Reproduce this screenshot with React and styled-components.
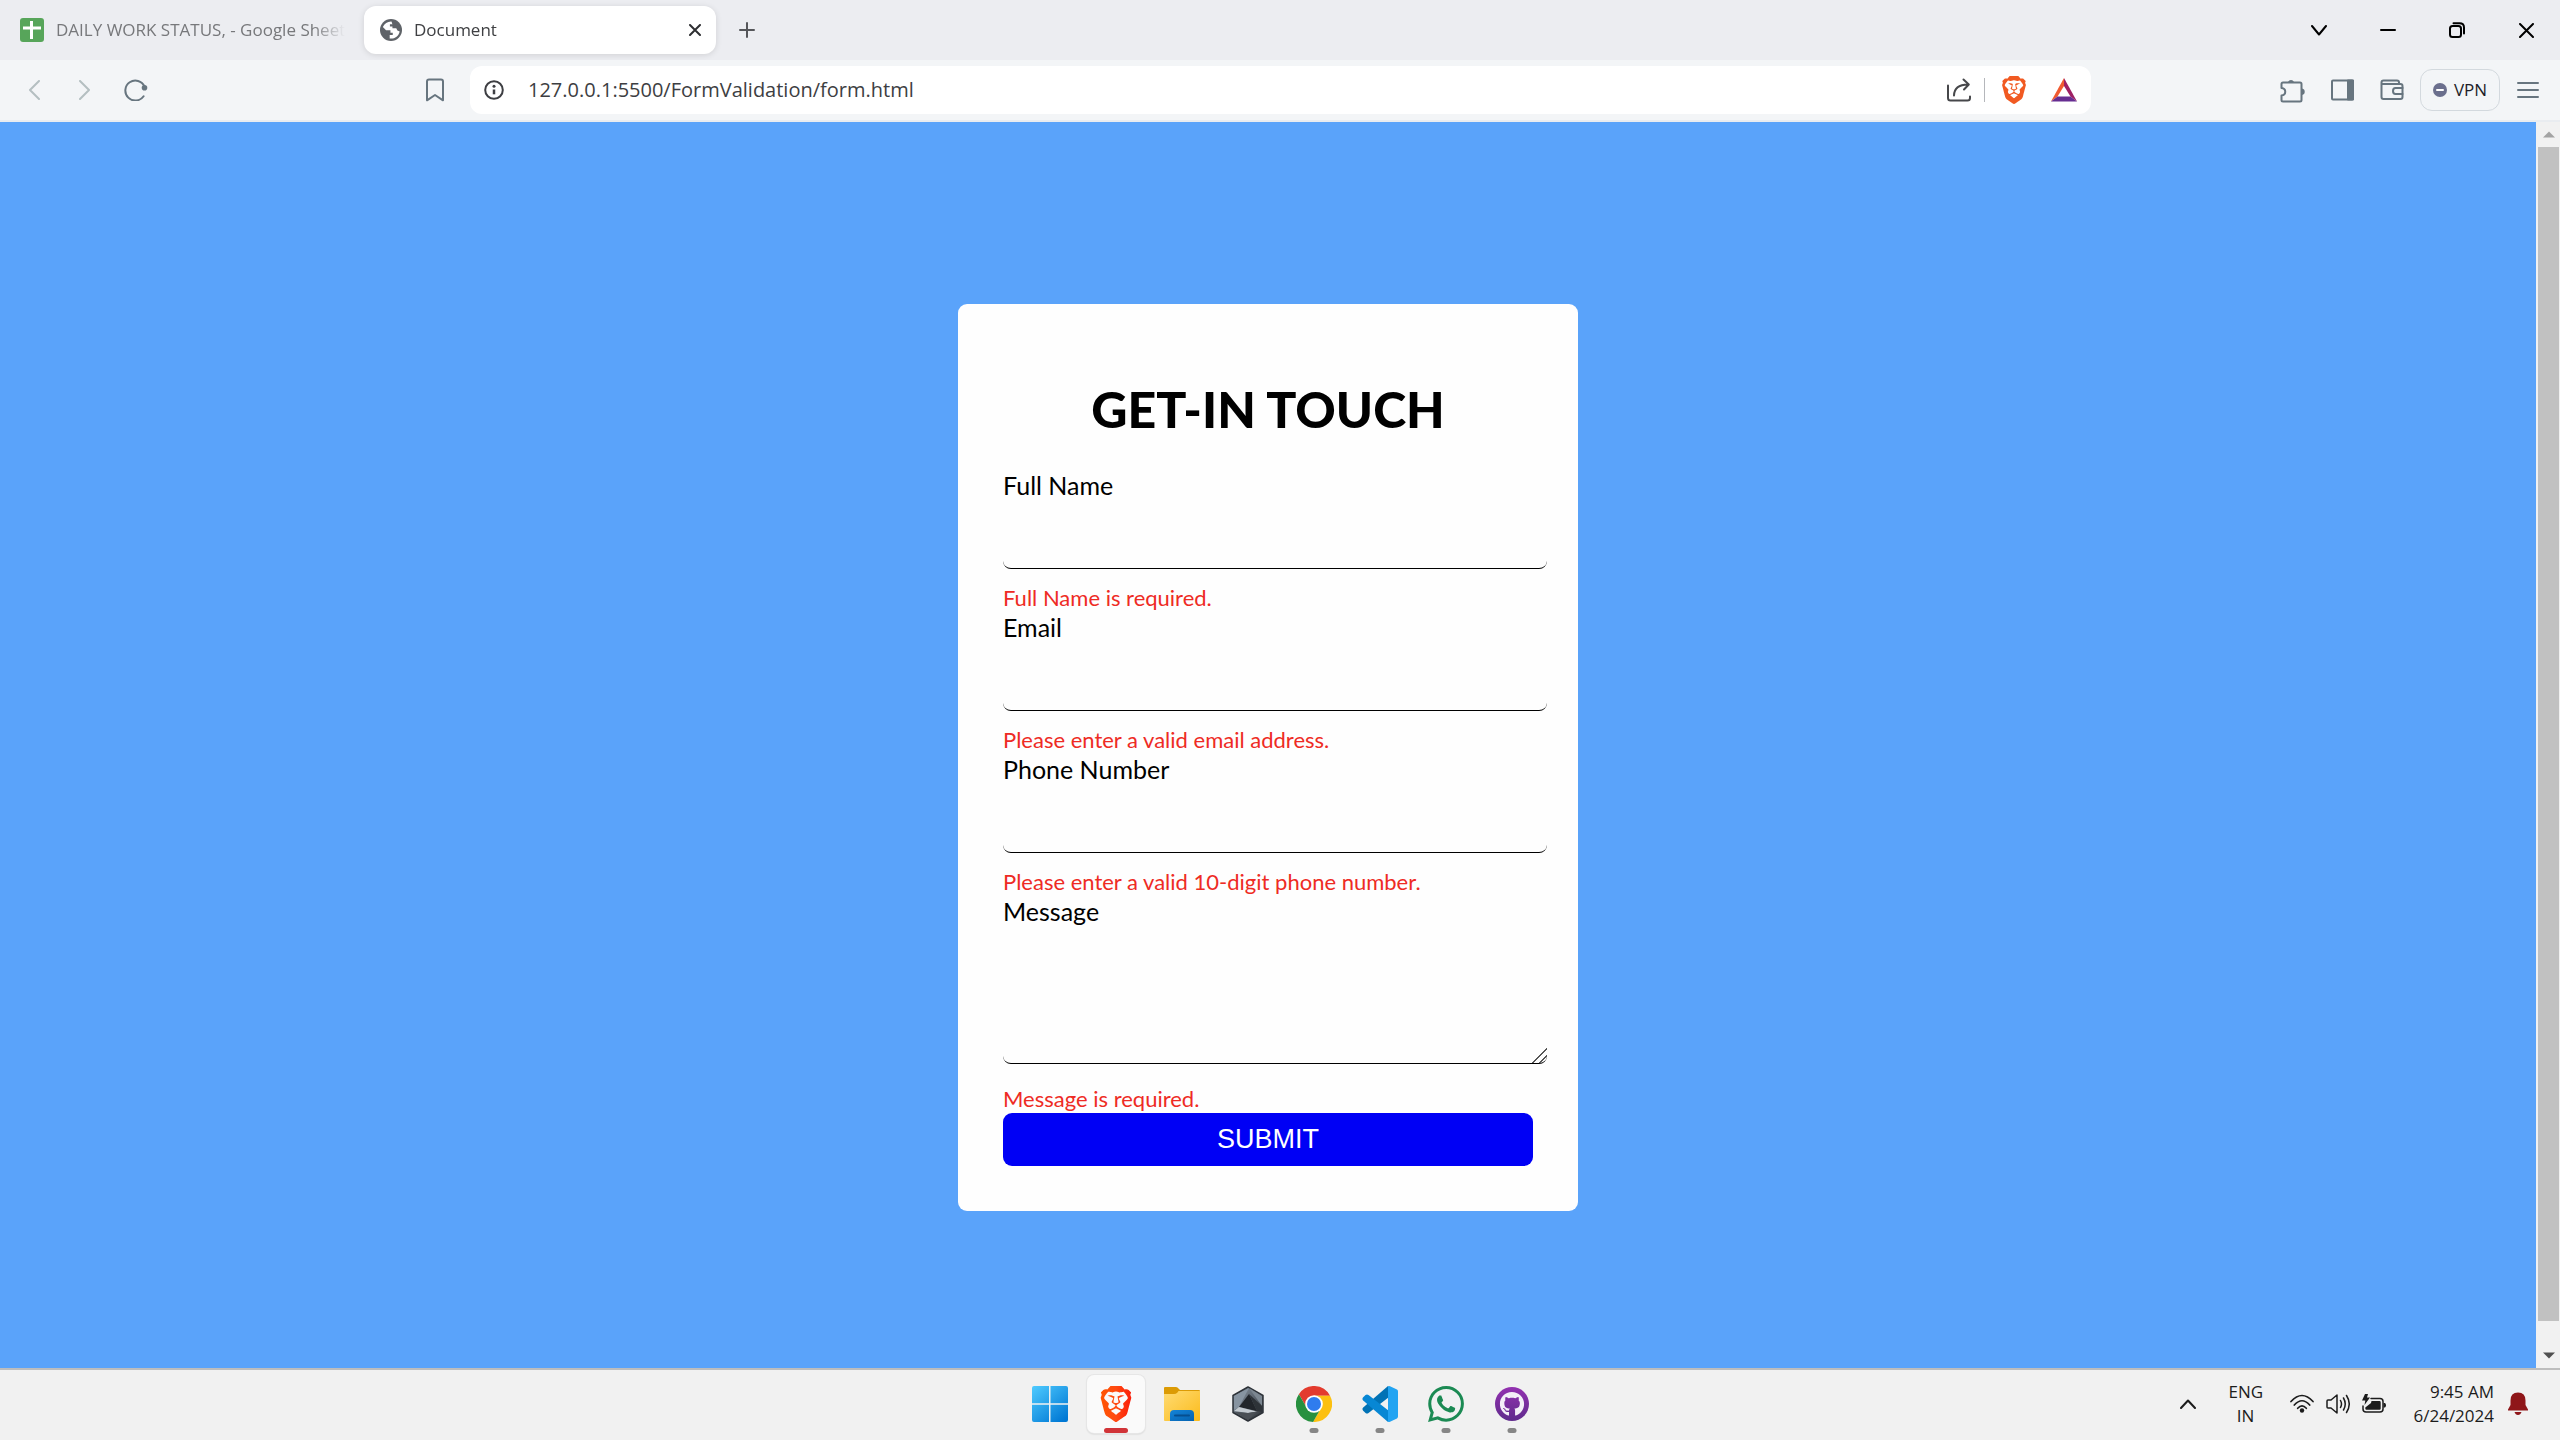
import React from 'react';
import styled, { createGlobalStyle, css } from 'styled-components';
import { SiBrave, SiWhatsapp } from 'react-icons/si';
import { FaGithub } from 'react-icons/fa';

const uiFont = '"Segoe UI", "Open Sans", "Noto Sans", sans-serif';
const formFont = '"Gill Sans", "Gill Sans MT", Lato, sans-serif';

const GlobalStyle = createGlobalStyle`
  *, *::before, *::after { box-sizing: border-box; }
  body { margin: 0; overflow: hidden; }
  button { border: 0; padding: 0; background: none; font: inherit; color: inherit; cursor: pointer; }
  svg { display: block; flex: none; }
`;

const Screen = styled.div`
  display: flex;
  flex-direction: column;
  height: 100vh;
  font-family: ${uiFont};
  font-size: 17px;
  line-height: 24px;
  color: #1c1c1c;
`;

/* ---------- Tab strip ---------- */

const TabStrip = styled.header`
  display: flex;
  align-items: flex-start;
  height: 60px;
  padding-top: 6px;
  background: #ecedf1;
`;

const Tabs = styled.div`
  display: flex;
  gap: 12px;
`;

const Tab = styled.div`
  display: flex;
  align-items: center;
  gap: 12px;
  width: 352px;
  height: 48px;
  padding: 0 4px 0 20px;
  border-radius: 12px;
  color: #77787b;
  ${({ $active }) =>
    $active &&
    css`
      padding: 0 8px 0 16px;
      background: #fff;
      color: #3f4043;
      box-shadow: 0 1px 6px rgba(0, 0, 0, 0.12);
    `}
`;

const TabTitle = styled.span`
  flex: 1;
  min-width: 0;
  overflow: hidden;
  white-space: nowrap;
  mask-image: linear-gradient(to right, #000 88%, transparent 99%);
`;

const IconButton = styled.button`
  display: flex;
  align-items: center;
  justify-content: center;
  width: ${({ $width }) => $width || 50}px;
  height: 48px;
  color: ${({ $color }) => $color || '#67757f'};
`;

const WindowControls = styled.div`
  display: flex;
  gap: 1px;
  margin-left: auto;
`;

/* ---------- Toolbar ---------- */

const Toolbar = styled.nav`
  display: flex;
  align-items: center;
  height: 62px;
  background: #f3f5f7;
  border-bottom: 2px solid #e9ecf0;
`;

const NavGroup = styled.div`
  display: flex;
  width: 470px;
  padding: 0 10px 0 8px;
`;

const BookmarkSlot = styled.div`
  margin-left: auto;
`;

const AddressBar = styled.form`
  display: flex;
  flex: 1;
  align-items: center;
  height: 48px;
  padding: 0 2px 0 14px;
  background: #fff;
  border-radius: 12px;
`;

const AddressInput = styled.input`
  flex: 1;
  min-width: 0;
  margin-left: 24px;
  padding: 0;
  border: 0;
  outline: 0;
  background: none;
  font-family: ${uiFont};
  font-size: 20px;
  line-height: 28px;
  color: #3d3e42;
`;

const Divider = styled.span`
  width: 1px;
  height: 24px;
  margin-right: 4px;
  background: #b5b7bb;
`;

const ToolGroup = styled.div`
  display: flex;
  align-items: center;
  justify-content: flex-end;
  width: 469px;
  padding-right: 7px;
`;

const VpnButton = styled.button`
  display: flex;
  align-items: center;
  justify-content: center;
  gap: 7px;
  width: 80px;
  height: 42px;
  margin: 0 3px;
  border: 1px solid #d3d9de;
  border-radius: 12px;
  color: #1d1d28;
`;

/* ---------- Page ---------- */

const Viewport = styled.div`
  display: flex;
  flex: 1;
  min-height: 0;
`;

const Page = styled.main`
  display: flex;
  flex: 1;
  align-items: flex-start;
  justify-content: center;
  padding-top: 182px;
  background: #5aa3fa;
`;

const Card = styled.form`
  width: 620px;
  padding: 75px 45px 45px;
  background: #fefefe;
  border-radius: 9px;
  font-family: ${formFont};
`;

const Title = styled.h1`
  margin: 0 0 31px;
  font-size: 50px;
  font-weight: 900;
  line-height: 60px;
  text-align: center;
  color: #000;
`;

const Field = styled.div`
  display: flex;
  flex-direction: column;
`;

const Label = styled.label`
  font-size: 25px;
  line-height: 30px;
  color: #000;
`;

const control = css`
  box-sizing: content-box;
  width: 100%;
  border: 0;
  border-bottom: 1px solid #000;
  border-radius: 8px;
  outline: 0;
  background: none;
  font-family: ${formFont};
  font-size: 25px;
`;

const TextInput = styled.input`
  ${control}
  height: 54px;
  margin-bottom: 15px;
  padding: 7px;
`;

const TextArea = styled.textarea`
  ${control}
  height: 123px;
  margin-bottom: 21px;
  padding: 7px;

  &::-webkit-resizer {
    background: linear-gradient(
      135deg,
      transparent 49%,
      #555 50% 55%,
      transparent 56% 71%,
      #555 72% 77%,
      transparent 78%
    );
  }
`;

const ErrorText = styled.p`
  margin: 0;
  font-size: 22px;
  line-height: 28px;
  color: #ee2b24;
`;

const SubmitButton = styled.button`
  display: block;
  width: 100%;
  height: 53px;
  background: #0000f5;
  border-radius: 9px;
  font-family: Arial, "Liberation Sans", sans-serif;
  font-size: 27px;
  line-height: 53px;
  color: #fff;
`;

const ScrollBar = styled.div`
  display: flex;
  flex-direction: column;
  width: 24px;
  padding: 0 1px 0 2px;
  background: #f1f1f1;
`;

const ScrollArrow = styled.button`
  display: flex;
  align-items: center;
  justify-content: center;
  height: 25px;
  color: ${({ $color }) => $color};
`;

const ScrollThumb = styled.div`
  flex: 1;
  margin-bottom: 22px;
  background: #c1c1c1;
`;

/* ---------- Taskbar ---------- */

const Taskbar = styled.footer`
  display: grid;
  grid-template-columns: 1fr auto 1fr;
  align-items: center;
  height: 72px;
  padding-bottom: 2px;
  background: #f1f1f1;
  border-top: 2px solid #bdbdbd;
`;

const Apps = styled.div`
  display: flex;
  grid-column: 2;
  gap: 8px;
  padding-left: 2px;
`;

const AppButton = styled.button`
  position: relative;
  display: flex;
  align-items: center;
  justify-content: center;
  width: 58px;
  height: 58px;
  border-radius: 7px;
  ${({ $active }) =>
    $active &&
    css`
      background: #fafafa;
      box-shadow: 0 0 0 1px #e6e6e6, 0 1px 2px rgba(0, 0, 0, 0.2);
    `}
`;

const Indicator = styled.span`
  position: absolute;
  bottom: 0;
  left: 50%;
  width: ${({ $active }) => ($active ? 24 : 9)}px;
  height: 5px;
  border-radius: 3px;
  background: ${({ $active }) => ($active ? '#d13438' : '#868686')};
  transform: translateX(-50%);
`;

const Tray = styled.div`
  display: flex;
  align-items: center;
  justify-content: flex-end;
  padding-right: 32px;
`;

const Language = styled.div`
  width: 34px;
  margin: 0 28px 0 32px;
  text-align: center;
`;

const StatusIcons = styled.div`
  display: flex;
  gap: 12px;
`;

const Clock = styled.div`
  margin: 0 14px 0 27px;
  text-align: right;
`;

/* ---------- Icons ---------- */

const Glyph = ({ w = 24, h = w, sw = 2, box, children, ...rest }) => (
  <svg
    width={w}
    height={h}
    viewBox={box || `0 0 ${w} ${h}`}
    fill="none"
    stroke="currentColor"
    strokeWidth={sw}
    strokeLinecap="round"
    strokeLinejoin="round"
    aria-hidden="true"
    {...rest}
  >
    {children}
  </svg>
);

const SheetsIcon = () => (
  <Glyph stroke="none">
    <rect width="24" height="24" rx="3" fill="#57a55a" />
    <path d="M3 8.500H10V3H13V8.500H21V11.500H13V21H10V11.500H3Z" fill="#fff" />
  </Glyph>
);

const GlobeIcon = () => (
  <Glyph w={22} box="2 2 20 20" stroke="none">
    <circle cx="12" cy="12" r="10" fill="#5f6368" />
    <path
      d="M12.500 4.200C9 4 6 6 4.600 9.200L7.500 12.200H11.500V14.400H13.600V16.500H10.800V19.700C15 20.300 19 17.700 19.900 13.300L17.800 12.500L16.800 10.500H13.300V8.800H11V6.700H13.500Z"
      fill="#fff"
    />
    <path d="M12.500 4.200L13.500 6.700H15.500L17 5.300Z" fill="#5f6368" />
  </Glyph>
);

const CloseIcon = ({ size = 15, sw = 2 }) => (
  <Glyph w={size} sw={sw}>
    <path d={`M1 1L${size - 1} ${size - 1}M${size - 1} 1L1 ${size - 1}`} />
  </Glyph>
);

const PlusIcon = () => (
  <Glyph w={16}>
    <path d="M8 1V15M1 8H15" />
  </Glyph>
);

const ChevronIcon = ({ d, w, h, sw }) => (
  <Glyph w={w} h={h} sw={sw}>
    <path d={d} />
  </Glyph>
);

const RestoreIcon = () => (
  <Glyph w={16}>
    <rect x="1" y="4" width="11" height="11" rx="2.500" />
    <path d="M4.500 1.200H10.500Q15 1.200 15 5.500V11.500" />
  </Glyph>
);

const ReloadIcon = () => (
  <Glyph w={24} h={22}>
    <path d="M19.600 17.200A10 10 0 1 1 20.500 7.500" />
    <circle cx="20.500" cy="8.700" r="2.800" fill="currentColor" stroke="none" />
  </Glyph>
);

const BookmarkIcon = () => (
  <Glyph w={18} h={24}>
    <path d="M3 1.500H15Q17 1.500 17 3.500V22.300L9 17L1 22.300V3.500Q1 1.500 3 1.500Z" />
  </Glyph>
);

const InfoIcon = () => (
  <Glyph w={20} color="#3d3e42">
    <circle cx="10" cy="10" r="8.800" />
    <path d="M10 9.500V14.300" strokeLinecap="butt" strokeWidth="2.500" />
    <circle cx="10" cy="6.300" r="1.500" fill="currentColor" stroke="none" />
  </Glyph>
);

const ShareIcon = () => (
  <Glyph w={24}>
    <path d="M1 7.500V20Q1 22.500 3.500 22.500H20.500Q23 22.500 23 20V18.500" />
    <path d="M7 17.500C7.200 10.500 11 6.500 21 6.500M16.500 1.500L21.800 6.500L17 11.500" />
  </Glyph>
);

const BatIcon = () => (
  <Glyph w={26} h={24} stroke="none">
    <path d="M13 0L13 8L6.500 18.500L0 23.500Z" fill="#f15a30" />
    <path d="M13 0L26 23.500L19.500 18.500L13 8Z" fill="#9e1f63" />
    <path d="M0 23.500L6.500 18.500H19.500L26 23.500Z" fill="#662d91" />
  </Glyph>
);

const ExtensionIcon = () => (
  <Glyph w={25}>
    <path d="M3 4.500H20Q21.500 4.500 21.500 6V22Q21.500 23.500 20 23.500H3Q1.500 23.500 1.500 22V17.500C6.500 17 6.500 10.500 1.500 10V6Q1.500 4.500 3 4.500Z" />
    <path d="M8 4A3.300 3.300 0 0 1 14 4ZM22 10.500A3.300 3.300 0 0 1 22 17Z" fill="currentColor" stroke="none" />
  </Glyph>
);

const SidebarIcon = () => (
  <Glyph w={23} h={22}>
    <rect x="1" y="1.500" width="21" height="19" rx="1" />
    <path d="M17 1.500H22V20.500H17Z" fill="currentColor" />
  </Glyph>
);

const WalletIcon = () => (
  <Glyph w={24} h={22}>
    <path d="M19 5V3.500Q19 1.500 17 1.500H3.500Q1.500 1.500 1.500 3.500V18Q1.500 20 3.500 20H20.500Q22.500 20 22.500 18V7Q22.500 5 20.500 5H2" />
    <path d="M22.500 9H15.500Q13 9 13 12T15.500 15H22.500" />
  </Glyph>
);

const VpnDot = () => (
  <Glyph w={14} stroke="none">
    <circle cx="7" cy="7" r="7" fill="#6b6f8d" />
    <rect x="3" y="6" width="8" height="2" rx="1" fill="#fff" />
  </Glyph>
);

const MenuIcon = () => (
  <Glyph w={22} h={16}>
    <path d="M1 1H21M1 8H21M1 15H21" />
  </Glyph>
);

const WindowsIcon = () => (
  <Glyph w={36} stroke="none">
    <defs>
      <linearGradient id="win" gradientUnits="userSpaceOnUse" x1="0" y1="0" x2="30" y2="36">
        <stop offset="0" stopColor="#4fcbff" />
        <stop offset="1" stopColor="#0078d4" />
      </linearGradient>
    </defs>
    <path
      d="M2 0H17V17.300H0V2Q0 0 2 0ZM18.500 0H34Q36 0 36 2V17.300H18.500ZM0 18.700H17V36H2Q0 36 0 34ZM18.500 18.700H36V34Q36 36 34 36H18.500Z"
      fill="url(#win)"
    />
  </Glyph>
);

const BraveAppIcon = () => (
  <>
    <svg width="0" height="0" aria-hidden="true">
      <defs>
        <linearGradient id="brave" x1="0" x2="1">
          <stop offset="0" stopColor="#ff5500" />
          <stop offset="0.500" stopColor="#ff4a12" />
          <stop offset="1" stopColor="#fb1c08" />
        </linearGradient>
      </defs>
    </svg>
    <SiBrave size={36} fill="url(#brave)" />
  </>
);

const FolderIcon = () => (
  <Glyph w={36} h={34} stroke="none">
    <defs>
      <linearGradient id="folder" x1="0" y1="0" x2="1" y2="1">
        <stop offset="0" stopColor="#ffdb73" />
        <stop offset="1" stopColor="#fbbb1b" />
      </linearGradient>
      <linearGradient id="drawer" x1="0" y1="0" x2="1" y2="1">
        <stop offset="0" stopColor="#1484d8" />
        <stop offset="1" stopColor="#0562b0" />
      </linearGradient>
    </defs>
    <path d="M1 0H12Q13.500 0 15 2L16 3H35Q36 3 36 4V10H0V1Q0 0 1 0Z" fill="#dc9b05" />
    <path d="M0 7H10Q12 7 13.500 5.500L14.500 4H36V33Q36 34 35 34H1Q0 34 0 33Z" fill="url(#folder)" />
    <path d="M6 34V27Q6 23 10 23H26Q30 23 30 27V34Z" fill="url(#drawer)" />
    <path d="M11 28.500H25" stroke="#064f8f" strokeWidth="2" />
  </Glyph>
);

const HexIcon = () => (
  <Glyph w={32} h={36} stroke="none">
    <defs>
      <linearGradient id="hex" x1="0" y1="0" x2="1" y2="1">
        <stop offset="0" stopColor="#8f9ba8" />
        <stop offset="0.500" stopColor="#5d6670" />
        <stop offset="1" stopColor="#2a2d31" />
      </linearGradient>
    </defs>
    <path d="M16 1L31 9.500V26.500L16 35L1 26.500V9.500Z" fill="url(#hex)" stroke="#2d3238" strokeWidth="1.500" />
    <path d="M17 2L30 10V20Z" fill="#7c8791" />
    <path d="M17 2L2 10V24L7 21Z" fill="#8794a1" />
    <path d="M17 8L25 25L7 21Z" fill="#22262b" />
    <path d="M2 25L7 21L25 25.500L16 27Z" fill="#c3cad0" />
    <path d="M2.500 26L16 27L25 25.500L16 34Z" fill="#4a4f55" />
    <path d="M17 8L30 20V26L25 25Z" fill="#2e3338" />
  </Glyph>
);

const ChromeIcon = () => (
  <Glyph w={36} stroke="none">
    <path d="M2.880 8.220A18 18 0 0 1 34.030 9.800H18L10.900 22.100Z" fill="#e33b2e" />
    <path d="M34.030 9.800A18 18 0 0 1 17.090 35.980L25.100 22.100L18 9.800Z" fill="#fcc010" />
    <path d="M17.090 35.980A18 18 0 0 1 2.880 8.220L10.900 22.100H25.100Z" fill="#27903f" />
    <circle cx="18" cy="18" r="8.800" fill="#fff" />
    <circle cx="18" cy="18" r="7" fill="#2f7cee" />
  </Glyph>
);

const CodeIcon = () => (
  <Glyph w={36} stroke="none">
    <path d="M26 0L1.200 21.500Q-0.300 23 1.200 24.700L3.500 27Q5 28 6.500 27L27 11Z" fill="#0172b5" />
    <path d="M26 36L1.200 14.500Q-0.300 13 1.200 11.300L3.500 9Q5 8 6.500 9L27 25Z" fill="#0787d4" />
    <path d="M26 0.300Q27 -0.200 28 0.300L35 3.600Q36 4.200 36 5.500V30.500Q36 31.800 35 32.400L28 35.700Q27 36.200 26 35.700Z" fill="#22a4f2" />
  </Glyph>
);

const GithubIcon = () => (
  <Glyph w={36} stroke="none">
    <defs>
      <linearGradient id="hub" x1="0" y1="0" x2="0" y2="1">
        <stop offset="0" stopColor="#9331b0" />
        <stop offset="1" stopColor="#5f2a8c" />
      </linearGradient>
    </defs>
    <circle cx="18" cy="18" r="17" fill="url(#hub)" />
    <FaGithub x="5.500" y="5.500" size={25} fill="#f3eef7" />
  </Glyph>
);

const WifiIcon = () => (
  <Glyph w={24} h={20} sw={1.7}>
    <path d="M1 7.500Q12 -4.500 23 7.500M4.300 11Q12 2.500 19.700 11M7.700 14.300Q12 9.500 16.300 14.300" />
    <circle cx="12" cy="16.500" r="2.200" fill="currentColor" stroke="none" />
  </Glyph>
);

const SpeakerIcon = () => (
  <Glyph w={24} h={20} sw={1.5}>
    <path d="M1 7Q1 6 2 6H5L11 1V19L5 14H2Q1 14 1 13Z" />
    <path d="M14.500 6.500Q16.500 10 14.500 13.500M17.500 4Q21 10 17.500 16M20.500 1.500Q26 10 20.500 18.500" />
  </Glyph>
);

const BatteryIcon = () => (
  <Glyph w={24} h={20} sw={1.5}>
    <path d="M9 4.500H18Q21 4.500 21 7.500V15Q21 18 18 18H4Q1 18 1 15V12" />
    <path d="M9.500 7H17.500Q18.700 7 18.700 8.200V14.500Q18.700 15.700 17.500 15.700H4.500Q3.300 15.700 3.300 14.500V13.500L9 9Z" fill="currentColor" stroke="none" />
    <path d="M21.500 9H23Q24 10 24 11.200T23 13.500H21.500Z" fill="currentColor" stroke="none" />
    <path d="M3 0H6L5 3.500H8L2.500 11L3.300 6.500H0Z" fill="currentColor" stroke="none" />
  </Glyph>
);

const BellIcon = () => (
  <Glyph w={20} h={24} stroke="none">
    <path d="M10 0.500Q17.500 0.500 17.500 8.500V13L20 17.500V18.500H0V17.500L2.500 13V8.500Q2.500 0.500 10 0.500ZM6.500 20H13.500Q12.500 23 10 23T6.500 20Z" fill="#8f1619" />
  </Glyph>
);

const ArrowIcon = ({ d }) => (
  <Glyph w={12} h={7} stroke="none">
    <path d={d} fill="currentColor" />
  </Glyph>
);

/* ---------- Data ---------- */

const fields = [
  { id: 'name', label: 'Full Name', type: 'text', error: 'Full Name is required.' },
  { id: 'email', label: 'Email', type: 'email', error: 'Please enter a valid email address.' },
  { id: 'phone', label: 'Phone Number', type: 'tel', error: 'Please enter a valid 10-digit phone number.' },
];

const apps = [
  { name: 'Start', icon: <WindowsIcon /> },
  { name: 'Brave', icon: <BraveAppIcon />, running: true, active: true },
  { name: 'File Explorer', icon: <FolderIcon /> },
  { name: 'Armoury', icon: <HexIcon /> },
  { name: 'Chrome', icon: <ChromeIcon />, running: true },
  { name: 'Visual Studio Code', icon: <CodeIcon />, running: true },
  { name: 'WhatsApp', icon: <SiWhatsapp size={36} color="#1b8a53" />, running: true },
  { name: 'GitHub Desktop', icon: <GithubIcon />, running: true },
];

export default function App() {
  const stop = (event) => event.preventDefault();

  return (
    <Screen>
      <GlobalStyle />

      <TabStrip>
        <Tabs>
          <Tab>
            <SheetsIcon />
            <TabTitle>DAILY WORK STATUS, - Google Sheets</TabTitle>
          </Tab>
          <Tab $active>
            <GlobeIcon />
            <TabTitle>Document</TabTitle>
            <IconButton $width={26} $color="#2e2f32" aria-label="Close tab">
              <CloseIcon size={12} />
            </IconButton>
          </Tab>
        </Tabs>
        <IconButton $width={62} $color="#55565a" aria-label="New tab">
          <PlusIcon />
        </IconButton>
        <WindowControls>
          <IconButton $width={68} $color="#000" aria-label="Search tabs">
            <ChevronIcon w={16} h={11} d="M1 1L8 9.500L15 1" />
          </IconButton>
          <IconButton $width={68} $color="#000" aria-label="Minimize">
            <ChevronIcon w={16} h={4} d="M1 2H15" />
          </IconButton>
          <IconButton $width={68} $color="#000" aria-label="Restore">
            <RestoreIcon />
          </IconButton>
          <IconButton $width={68} $color="#000" aria-label="Close window">
            <CloseIcon />
          </IconButton>
        </WindowControls>
      </TabStrip>

      <Toolbar>
        <NavGroup>
          <IconButton $width={51} $color="#b4bfc1" aria-label="Back">
            <ChevronIcon w={12} h={20} d="M11 1L2 10L11 19" />
          </IconButton>
          <IconButton $width={51} $color="#b4bfc1" aria-label="Forward">
            <ChevronIcon w={12} h={20} d="M1 1L10 10L1 19" />
          </IconButton>
          <IconButton $width={51} aria-label="Reload">
            <ReloadIcon />
          </IconButton>
          <BookmarkSlot>
            <IconButton aria-label="Bookmark this tab">
              <BookmarkIcon />
            </IconButton>
          </BookmarkSlot>
        </NavGroup>
        <AddressBar onSubmit={stop}>
          <InfoIcon />
          <AddressInput aria-label="Address" defaultValue="127.0.0.1:5500/FormValidation/form.html" />
          <IconButton type="button" $color="#46474a" aria-label="Share">
            <ShareIcon />
          </IconButton>
          <Divider />
          <IconButton type="button" aria-label="Brave Shields">
            <SiBrave size={28} color="#f15a22" />
          </IconButton>
          <IconButton type="button" aria-label="Brave Rewards">
            <BatIcon />
          </IconButton>
        </AddressBar>
        <ToolGroup>
          <IconButton aria-label="Extensions">
            <ExtensionIcon />
          </IconButton>
          <IconButton aria-label="Sidebar">
            <SidebarIcon />
          </IconButton>
          <IconButton aria-label="Wallet">
            <WalletIcon />
          </IconButton>
          <VpnButton>
            <VpnDot />
            VPN
          </VpnButton>
          <IconButton aria-label="Menu">
            <MenuIcon />
          </IconButton>
        </ToolGroup>
      </Toolbar>

      <Viewport>
        <Page>
          <Card onSubmit={stop} noValidate>
            <Title>GET-IN TOUCH</Title>
            {fields.map(({ id, label, type, error }) => (
              <Field key={id}>
                <Label htmlFor={id}>{label}</Label>
                <TextInput id={id} type={type} aria-describedby={`${id}-error`} />
                <ErrorText id={`${id}-error`}>{error}</ErrorText>
              </Field>
            ))}
            <Field>
              <Label htmlFor="message">Message</Label>
              <TextArea id="message" aria-describedby="message-error" />
              <ErrorText id="message-error">Message is required.</ErrorText>
            </Field>
            <SubmitButton type="submit">SUBMIT</SubmitButton>
          </Card>
        </Page>
        <ScrollBar>
          <ScrollArrow $color="#a3a3a3" aria-label="Scroll up">
            <ArrowIcon d="M0 6.500L6 0.500L12 6.500Z" />
          </ScrollArrow>
          <ScrollThumb />
          <ScrollArrow $color="#505050" aria-label="Scroll down">
            <ArrowIcon d="M0 0.500L6 6.500L12 0.500Z" />
          </ScrollArrow>
        </ScrollBar>
      </Viewport>

      <Taskbar>
        <Apps>
          {apps.map(({ name, icon, running, active }) => (
            <AppButton key={name} $active={active} aria-label={name}>
              {icon}
              {running && <Indicator $active={active} />}
            </AppButton>
          ))}
        </Apps>
        <Tray>
          <ChevronIcon w={16} h={10} d="M1 9L8 1.500L15 9" />
          <Language>
            ENG
            <br />
            IN
          </Language>
          <StatusIcons>
            <WifiIcon />
            <SpeakerIcon />
            <BatteryIcon />
          </StatusIcons>
          <Clock>
            9:45 AM
            <br />
            6/24/2024
          </Clock>
          <BellIcon />
        </Tray>
      </Taskbar>
    </Screen>
  );
}
